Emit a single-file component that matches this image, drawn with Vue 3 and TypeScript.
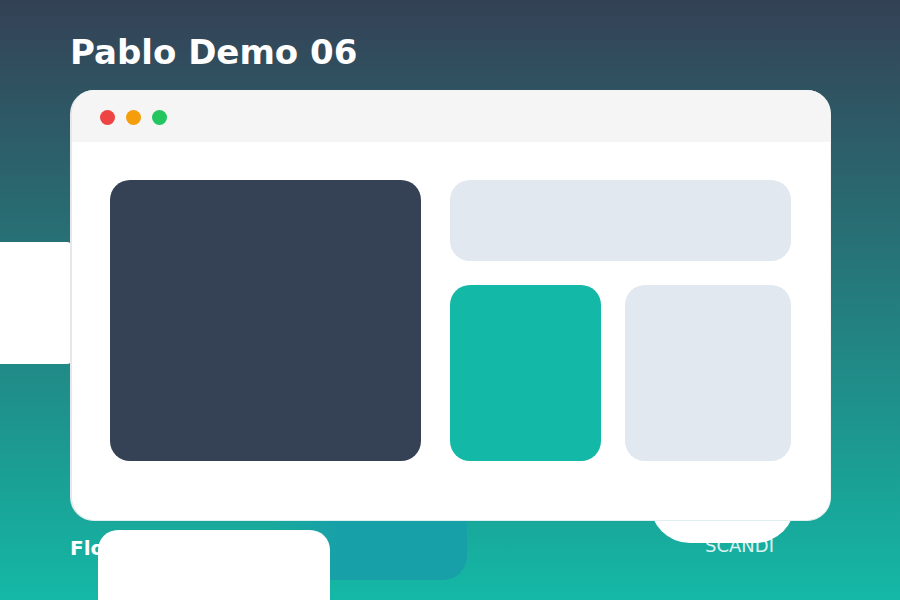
<script setup lang="ts">
const dots: string[] = ['#ef4444', '#f59e0b', '#22c55e']
</script>

<template>
  <div class="page">
    <div class="glow"></div>
    <div class="side"></div>
    <div class="pill"></div>
    <h1 class="title">Pablo Demo 06</h1>
    <section class="window">
      <header class="bar">
        <span v-for="c in dots" :key="c" class="dot" :style="{ background: c }"></span>
      </header>
      <div class="content">
        <div class="hero"></div>
        <div class="right">
          <div class="wide"></div>
          <div class="lower">
            <div class="accent"></div>
            <div class="soft"></div>
          </div>
        </div>
      </div>
    </section>
    <footer class="foot">
      <span class="brand">Flo</span>
      <span class="tag">SCANDI</span>
    </footer>
    <div class="card"></div>
  </div>
</template>

<style>
html, body { margin: 0; padding: 0; }
</style>

<style scoped>
.page {
  position: relative;
  width: 900px;
  height: 600px;
  box-sizing: border-box;
  padding: 32px 70px 0;
  overflow: hidden;
  background: linear-gradient(180deg, #344155 0%, #14b8a6 100%);
  font-family: "DejaVu Sans", sans-serif;
  color: #fff;
}
.title {
  margin: 0;
  height: 40px;
  font-size: 34px;
  line-height: 40px;
  font-weight: 700;
}
.window {
  position: relative;
  z-index: 2;
  margin-top: 18px;
  width: 761px;
  height: 431px;
  box-sizing: border-box;
  border-radius: 24px;
  background: #fff;
  overflow: hidden;
  border-left: 2px solid #e5e7eb;
  border-right: 1px solid #f0f4f5;
  border-bottom: 1px solid #dfeeee;
}
.bar {
  display: flex;
  align-items: center;
  gap: 11px;
  height: 52px;
  box-sizing: border-box;
  padding: 2px 0 0 28px;
  background: #f5f5f6;
}
.dot {
  width: 15px;
  height: 15px;
  border-radius: 50%;
}
.content {
  display: flex;
  gap: 29px;
  padding: 38px 39px 0 38px;
}
.hero {
  width: 311px;
  height: 281px;
  border-radius: 20px;
  background: #354154;
}
.right {
  display: flex;
  flex-direction: column;
  gap: 24px;
  width: 341px;
}
.wide {
  height: 81px;
  border-radius: 20px;
  background: #e2e8f0;
}
.lower {
  display: flex;
  gap: 24px;
}
.accent {
  width: 151px;
  height: 176px;
  border-radius: 20px;
  background: #14b8a6;
}
.soft {
  width: 166px;
  height: 176px;
  border-radius: 20px;
  background: #e2e8f0;
}
.foot {
  display: flex;
  justify-content: space-between;
  align-items: center;
  margin-top: 15px;
  height: 24px;
}
.brand {
  font-size: 20px;
  font-weight: 700;
}
.tag {
  margin: -6px 56px 0 0;
  font-size: 18px;
  opacity: 0.85;
}
.glow {
  position: absolute;
  left: 270px;
  top: 400px;
  width: 197px;
  height: 180px;
  border-radius: 24px;
  background: linear-gradient(90deg, rgba(24, 160, 168, 0) 0%, #18a0a8 35%);
}
.side {
  position: absolute;
  left: 0;
  top: 242px;
  width: 71px;
  height: 122px;
  border-radius: 0 4px 4px 0;
  background: #fff;
}
.pill {
  position: absolute;
  z-index: 1;
  left: 650px;
  top: 480px;
  width: 145px;
  height: 63px;
  border-radius: 0 0 40px 40px;
  background: #fff;
}
.card {
  position: absolute;
  left: 98px;
  top: 530px;
  width: 232px;
  height: 90px;
  border-radius: 20px 20px 0 0;
  background: #fff;
}
</style>
